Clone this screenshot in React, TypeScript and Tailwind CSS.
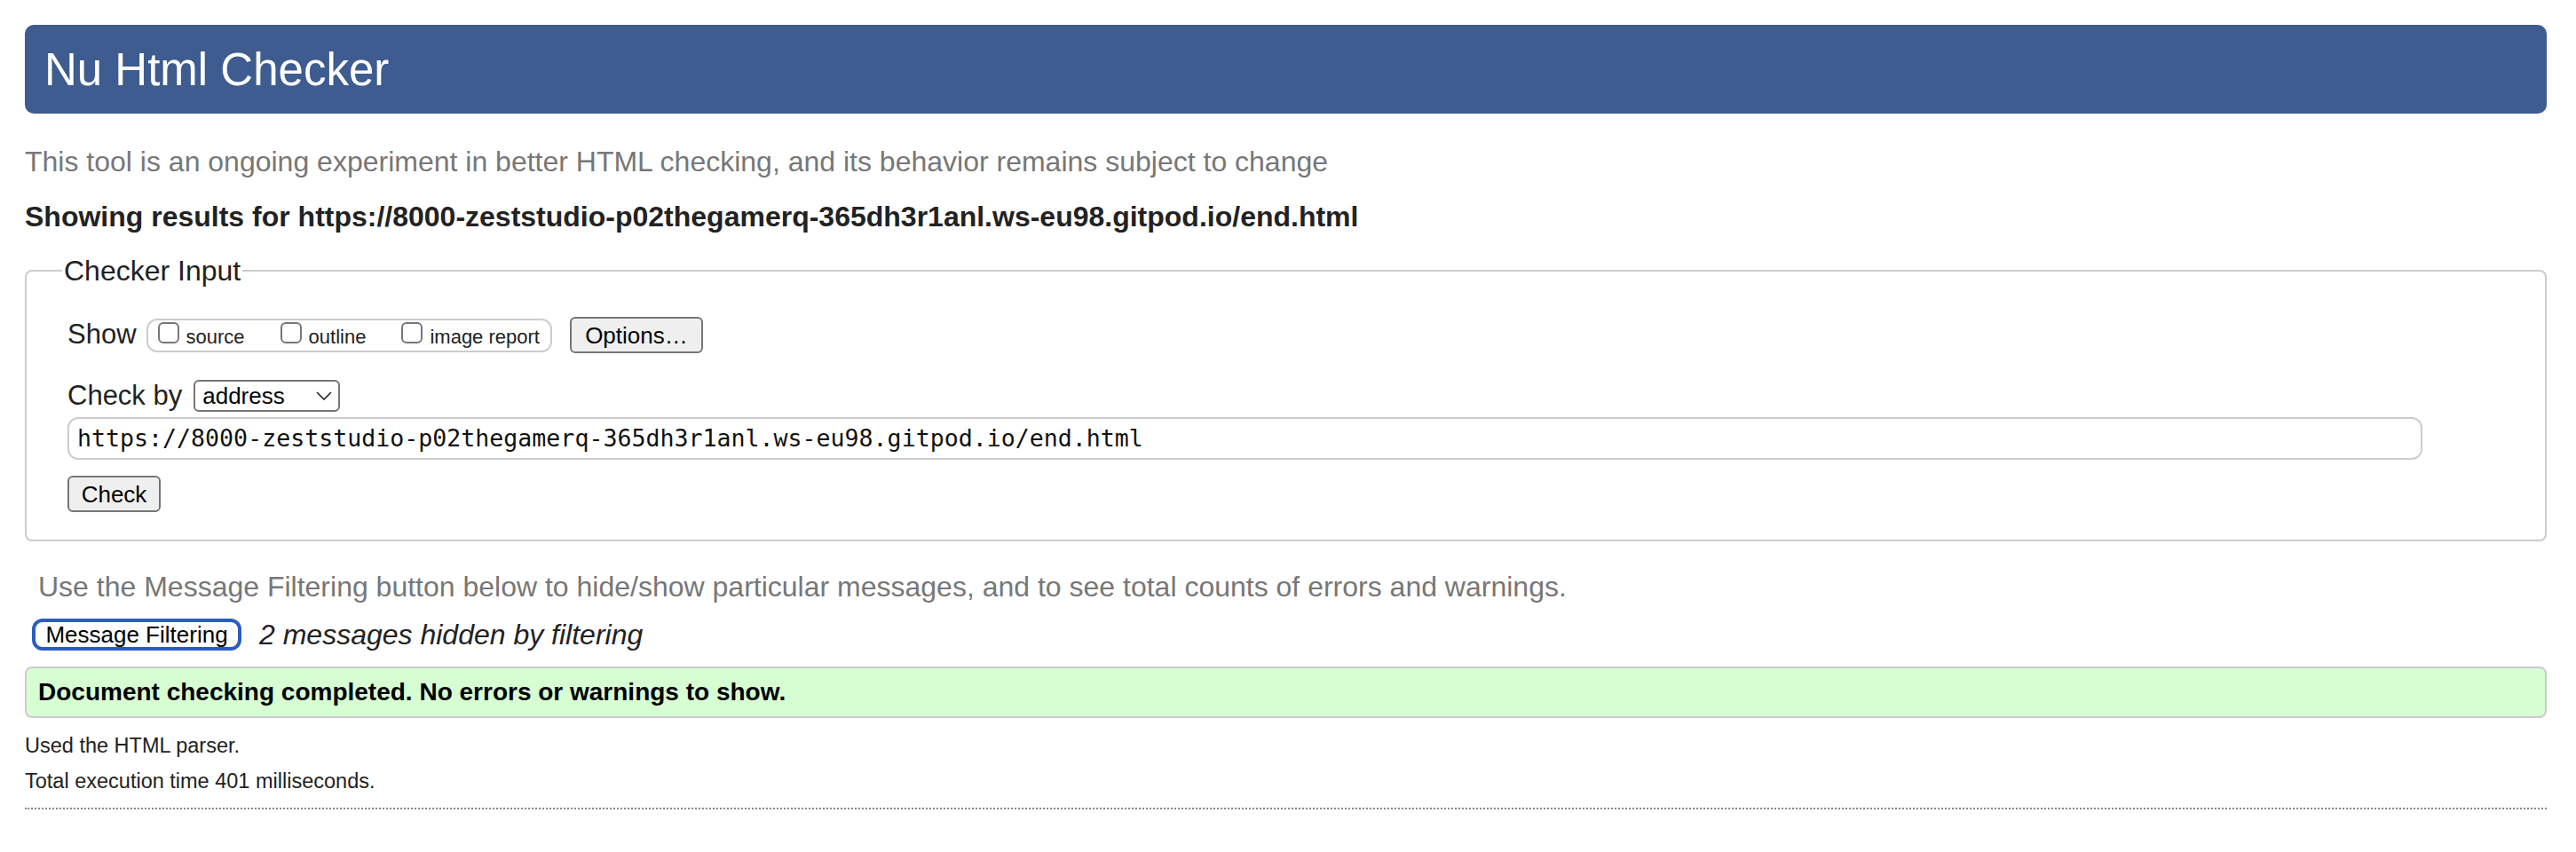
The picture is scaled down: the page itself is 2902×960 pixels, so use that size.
export default function App() {
  const url = 'https://8000-zeststudio-p02thegamerq-365dh3r1anl.ws-eu98.gitpod.io/end.html';

  return (
    <div className="min-h-screen bg-white pl-[28px] pr-[33px] pt-[28px] font-['Liberation_Sans',Arial,sans-serif] text-[#222]">
      {/* Header */}
      <header className="flex h-[100px] items-center rounded-[10px] bg-[#3e5c8f] pl-[22px]">
        <h1 className="text-[51px] font-normal leading-none text-white">Nu Html Checker</h1>
      </header>

      <p className="mt-[34px] text-[32px] leading-[40px] text-[#777]">
        This tool is an ongoing experiment in better HTML checking, and its behavior remains subject to change
      </p>
      <p className="mt-[22px] text-[32px] font-bold leading-[40px] text-[#222]">Showing results for {url}</p>

      {/* Checker input */}
      <fieldset className="mt-[21px] rounded-[8px] border-2 border-[#ccc] pb-[31px] pl-[46px] pr-[46px] pt-[32px]">
        <legend className="-ml-[6px] px-[2px] text-[32px] leading-[40px] text-[#222]">Checker Input</legend>

        <div className="flex h-[41px] items-center">
          <span className="mr-[11px] text-[31px] text-[#222]">Show</span>
          <div className="flex h-[38px] items-start rounded-[12px] border-2 border-[#ccc] pl-[11px] pr-[12px] pt-[2px]">
            {['source', 'outline', 'image report'].map((label, i) => (
              <label key={label} className={`flex items-baseline gap-[8px] ${i > 0 ? 'ml-[40px]' : ''}`}>
                <span className="block h-[24px] w-[24px] rounded-[6px] border-2 border-[#767676] bg-white" />
                <span className="text-[22px] leading-none text-[#222]">{label}</span>
              </label>
            ))}
          </div>
          <button className="ml-[20px] h-[41px] w-[150px] rounded-[6px] border-2 border-[#767676] bg-[#efefef] text-[26px] text-black">
            Options…
          </button>
        </div>

        <div className="mt-[30px] flex h-[36px] items-center">
          <span className="mr-[13px] text-[31px] text-[#222]">Check by</span>
          <div className="flex h-[36px] w-[165px] items-center justify-between rounded-[6px] border-2 border-[#767676] bg-white pl-[8px] pr-[6px]">
            <span className="text-[26px] leading-none text-black">address</span>
            <svg width="18" height="10" viewBox="0 0 18 10" className="mr-[1px]">
              <polyline points="1,1 9,9 17,1" fill="none" stroke="#222" strokeWidth="1.6" />
            </svg>
          </div>
        </div>

        <div className="mt-[6px] flex h-[48px] w-[2653px] items-center rounded-[12px] border-2 border-[#ccc] pl-[9px]">
          <span className="font-['DejaVu_Sans_Mono',monospace] text-[26.6px] leading-none text-[#111]">{url}</span>
        </div>

        <button className="mt-[18px] block h-[41px] w-[105px] rounded-[6px] border-2 border-[#767676] bg-[#efefef] text-[26px] text-black">
          Check
        </button>
      </fieldset>

      <p className="ml-[15px] mt-[31px] text-[32px] leading-[40px] text-[#777]">
        Use the Message Filtering button below to hide/show particular messages, and to see total counts of errors and warnings.
      </p>

      <div className="mt-[16px] flex items-center">
        <button className="ml-[8px] h-[36px] w-[236px] rounded-[12px] border-[4px] border-[#2a5cc4] bg-white text-[26px] leading-none text-black">
          Message Filtering
        </button>
        <span className="ml-[20px] text-[32px] italic leading-none text-[#222]">2 messages hidden by filtering</span>
      </div>

      <div className="mt-[18px] flex h-[58px] items-center rounded-[8px] border-2 border-[#ccc] bg-[#d7fdd2] pl-[13px]">
        <p className="text-[28px] font-bold leading-none text-black">Document checking completed. No errors or warnings to show.</p>
      </div>

      <div className="mt-[11px] text-[23.5px] leading-[40px] text-[#222]">
        <p>Used the HTML parser.</p>
        <p>Total execution time 401 milliseconds.</p>
      </div>

      <hr className="mt-[10px] border-0 border-t-2 border-dotted border-[#888]" />
    </div>
  );
}
